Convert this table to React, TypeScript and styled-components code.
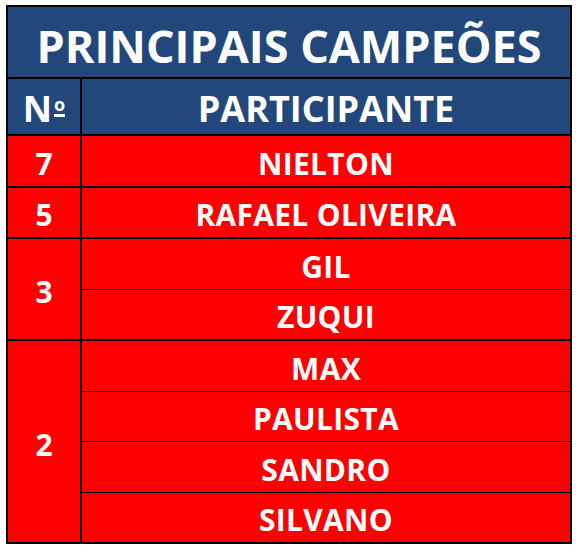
import React from "react";
import styled, { createGlobalStyle } from "styled-components";

const GlobalStyle = createGlobalStyle`
  body {
    margin: 0;
    background: #ffffff;
    font-family: "Open Sans", "Liberation Sans", sans-serif;
  }
`;

const Page = styled.div`
  padding: 5px 0 0 6px;
`;

const Table = styled.table`
  width: 566px;
  border-collapse: collapse;
  border: 2px solid #000;
  color: #fff;
  font-weight: 700;
  text-align: center;
`;

const TitleCell = styled.th`
  height: 64px;
  padding: 6px 0 0;
  background: #22477a;
  border-bottom: 2px solid #000;
  font-size: 45px;
  line-height: 1;
  font-weight: 700;
`;

const HeadCell = styled.th<{ $narrow?: boolean }>`
  height: 50px;
  padding: 5px 0 0;
  width: ${(p) => (p.$narrow ? "72px" : "auto")};
  background: #22477a;
  border: 2px solid #000;
  font-size: 36px;
  line-height: 1;
  font-weight: 700;
`;

const Ordinal = styled.span`
  display: inline-block;
  font-size: 0.5em;
  line-height: 1;
  vertical-align: 0.62em;
  margin-left: 2px;
  padding-bottom: 1px;
  border-bottom: 3px solid #fff;
`;

const Cell = styled.td<{ $groupEnd?: boolean }>`
  height: 43.5px;
  padding: 6px 0 0;
  background: #ff0000;
  border-left: 2px solid #000;
  border-top: 1px solid #000;
  border-bottom: ${(p) => (p.$groupEnd ? "2px" : "1px")} solid #000;
  font-size: 30px;
  letter-spacing: 0.3px;
  line-height: 1;
  vertical-align: middle;
`;

const RankCell = styled(Cell)`
  border-bottom: 2px solid #000;
  border-top: 2px solid #000;
  letter-spacing: 0;
`;

interface IGroup {
  titles: number;
  names: string[];
}

const groups: IGroup[] = [
  { titles: 7, names: ["NIELTON"] },
  { titles: 5, names: ["RAFAEL OLIVEIRA"] },
  { titles: 3, names: ["GIL", "ZUQUI"] },
  { titles: 2, names: ["MAX", "PAULISTA", "SANDRO", "SILVANO"] }
];

const App = () => {
  return (
    <Page>
      <GlobalStyle />
      <Table>
        <thead>
          <tr>
            <TitleCell colSpan={2}>PRINCIPAIS CAMPEÕES</TitleCell>
          </tr>
          <tr>
            <HeadCell $narrow>
              N<Ordinal>o</Ordinal>
            </HeadCell>
            <HeadCell>PARTICIPANTE</HeadCell>
          </tr>
        </thead>
        <tbody>
          {groups.map((g) =>
            g.names.map((name, i) => (
              <tr key={name}>
                {i === 0 && (
                  <RankCell rowSpan={g.names.length}>{g.titles}</RankCell>
                )}
                <Cell $groupEnd={i === g.names.length - 1}>{name}</Cell>
              </tr>
            ))
          )}
        </tbody>
      </Table>
    </Page>
  );
};

export default App;
